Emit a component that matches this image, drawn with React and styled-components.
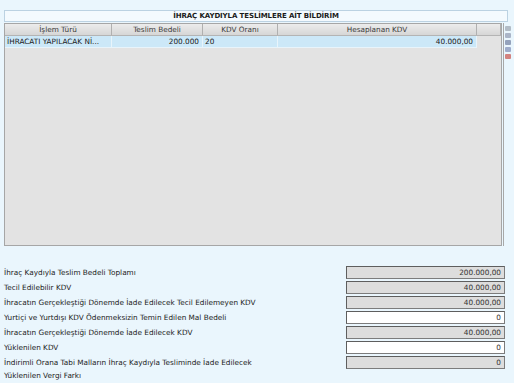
import React from "react";
import styled, { createGlobalStyle } from "styled-components";

const GlobalStyle = createGlobalStyle`
  html, body {
    margin: 0;
    padding: 0;
    background: #eaf6fd;
  }
  body {
    font-family: "DejaVu Sans", Tahoma, sans-serif;
    font-size: 7.3px;
    color: #1a1a1a;
  }
`;

const rows = [
  { text: "İHRACATI YAPILACAK Nİ...", amount: "200.000", rate: "20", kdv: "40.000,00" },
];

const fields = [
  { label: "İhraç Kaydıyla Teslim Bedeli Toplamı", value: "200.000,00", editable: false },
  { label: "Tecil Edilebilir KDV", value: "40.000,00", editable: false },
  { label: "İhracatın Gerçekleştiği Dönemde İade Edilecek Tecil Edilemeyen KDV", value: "40.000,00", editable: false },
  { label: "Yurtiçi ve Yurtdışı KDV Ödenmeksizin Temin Edilen Mal Bedeli", value: "0", editable: true },
  { label: "İhracatın Gerçekleştiği Dönemde İade Edilecek KDV", value: "40.000,00", editable: false },
  { label: "Yüklenilen KDV", value: "0", editable: true },
  { label: "İndirimli Orana Tabi Malların İhraç Kaydıyla Tesliminde İade Edilecek Yüklenilen Vergi Farkı", value: "0", editable: false },
];

const toolIcons = ["#9aa4ae", "#8e9ab0", "#6f7f9f", "#7d8db5", "#c8524a"];

const App = () => {
  return (
    <>
      <GlobalStyle />
      <Page>
        <TitleBox>İHRAÇ KAYDIYLA TESLİMLERE AİT BİLDİRİM</TitleBox>
        <GridArea>
          <Grid>
            <HeaderRow>
              <HeadCell>İşlem Türü</HeadCell>
              <HeadCell>Teslim Bedeli</HeadCell>
              <HeadCell>KDV Oranı</HeadCell>
              <HeadCell>Hesaplanan KDV</HeadCell>
              <HeadCell />
            </HeaderRow>
            {rows.map((r, i) => (
              <DataRow key={i}>
                <Cell>{r.text}</Cell>
                <Cell $right>{r.amount}</Cell>
                <Cell>{r.rate}</Cell>
                <Cell $right>{r.kdv}</Cell>
              </DataRow>
            ))}
          </Grid>
          <SideBar>
            {toolIcons.map((c, i) => (
              <ToolIcon key={i} $color={c} />
            ))}
          </SideBar>
        </GridArea>
        <Form>
          {fields.map((f, i) => (
            <FormRow key={i}>
              <Label>{f.label}</Label>
              <Field $editable={f.editable}>{f.value}</Field>
            </FormRow>
          ))}
        </Form>
      </Page>
    </>
  );
};

export default App;

const Page = styled.div`
  width: 514px;
  height: 383px;
  box-sizing: border-box;
  padding: 10px 0 0 4px;
  overflow: hidden;
`;

const TitleBox = styled.div`
  width: 504px;
  height: 12px;
  box-sizing: border-box;
  border: 1px solid #bcd2e2;
  background: #f4fafe;
  font-weight: bold;
  font-size: 7px;
  line-height: 10px;
  text-align: center;
  letter-spacing: -0.1px;
`;

const GridArea = styled.div`
  display: flex;
  margin-top: 1px;
`;

const Grid = styled.div`
  width: 498px;
  height: 223px;
  box-sizing: border-box;
  border: 1px solid #a6a6a6;
  background: #e3e3e3;
`;

const HeaderRow = styled.div`
  display: grid;
  grid-template-columns: 107px 91px 75px 199px 1fr;
  height: 11px;
  background: linear-gradient(#ececec, #d6d6d6);
  border-bottom: 1px solid #b4b4b4;
`;

const HeadCell = styled.div`
  border-right: 1px solid #b0b0b0;
  text-align: center;
  line-height: 11px;
  color: #3a3a3a;
  white-space: nowrap;
  overflow: hidden;
`;

const DataRow = styled.div`
  display: grid;
  grid-template-columns: 107px 91px 75px 199px;
  height: 12px;
`;

const Cell = styled.div`
  background: #cce8f8;
  border-right: 1px solid #e8f4fb;
  border-bottom: 1px solid #e8f4fb;
  line-height: 11px;
  padding: 0 3px 0 2px;
  text-align: ${(p) => (p.$right ? "right" : "left")};
  white-space: nowrap;
  overflow: hidden;
`;

const SideBar = styled.div`
  width: 8px;
  margin-left: 1px;
  border-left: 1px solid #a8a8a8;
  padding-top: 3px;
  display: flex;
  flex-direction: column;
  gap: 2px;
`;

const ToolIcon = styled.div`
  width: 6px;
  height: 5px;
  margin-left: 1px;
  background: ${(p) => p.$color};
  border-radius: 1px;
  opacity: 0.7;
`;

const Form = styled.div`
  margin-top: 20px;
  display: flex;
  flex-direction: column;
  gap: 2px;
`;

const FormRow = styled.div`
  display: flex;
  align-items: flex-start;
  justify-content: space-between;
  width: 501px;
  height: 13px;
`;

const Label = styled.div`
  max-width: 262px;
  line-height: 13px;
  color: #222;
`;

const Field = styled.div`
  width: 159px;
  height: 13px;
  box-sizing: border-box;
  border: 1px solid #7c7c7c;
  border-top-color: #5e5e5e;
  border-left-color: #5e5e5e;
  background: ${(p) => (p.$editable ? "#ffffff" : "#dddddd")};
  text-align: right;
  line-height: 11px;
  padding-right: 3px;
  color: #333;
`;
